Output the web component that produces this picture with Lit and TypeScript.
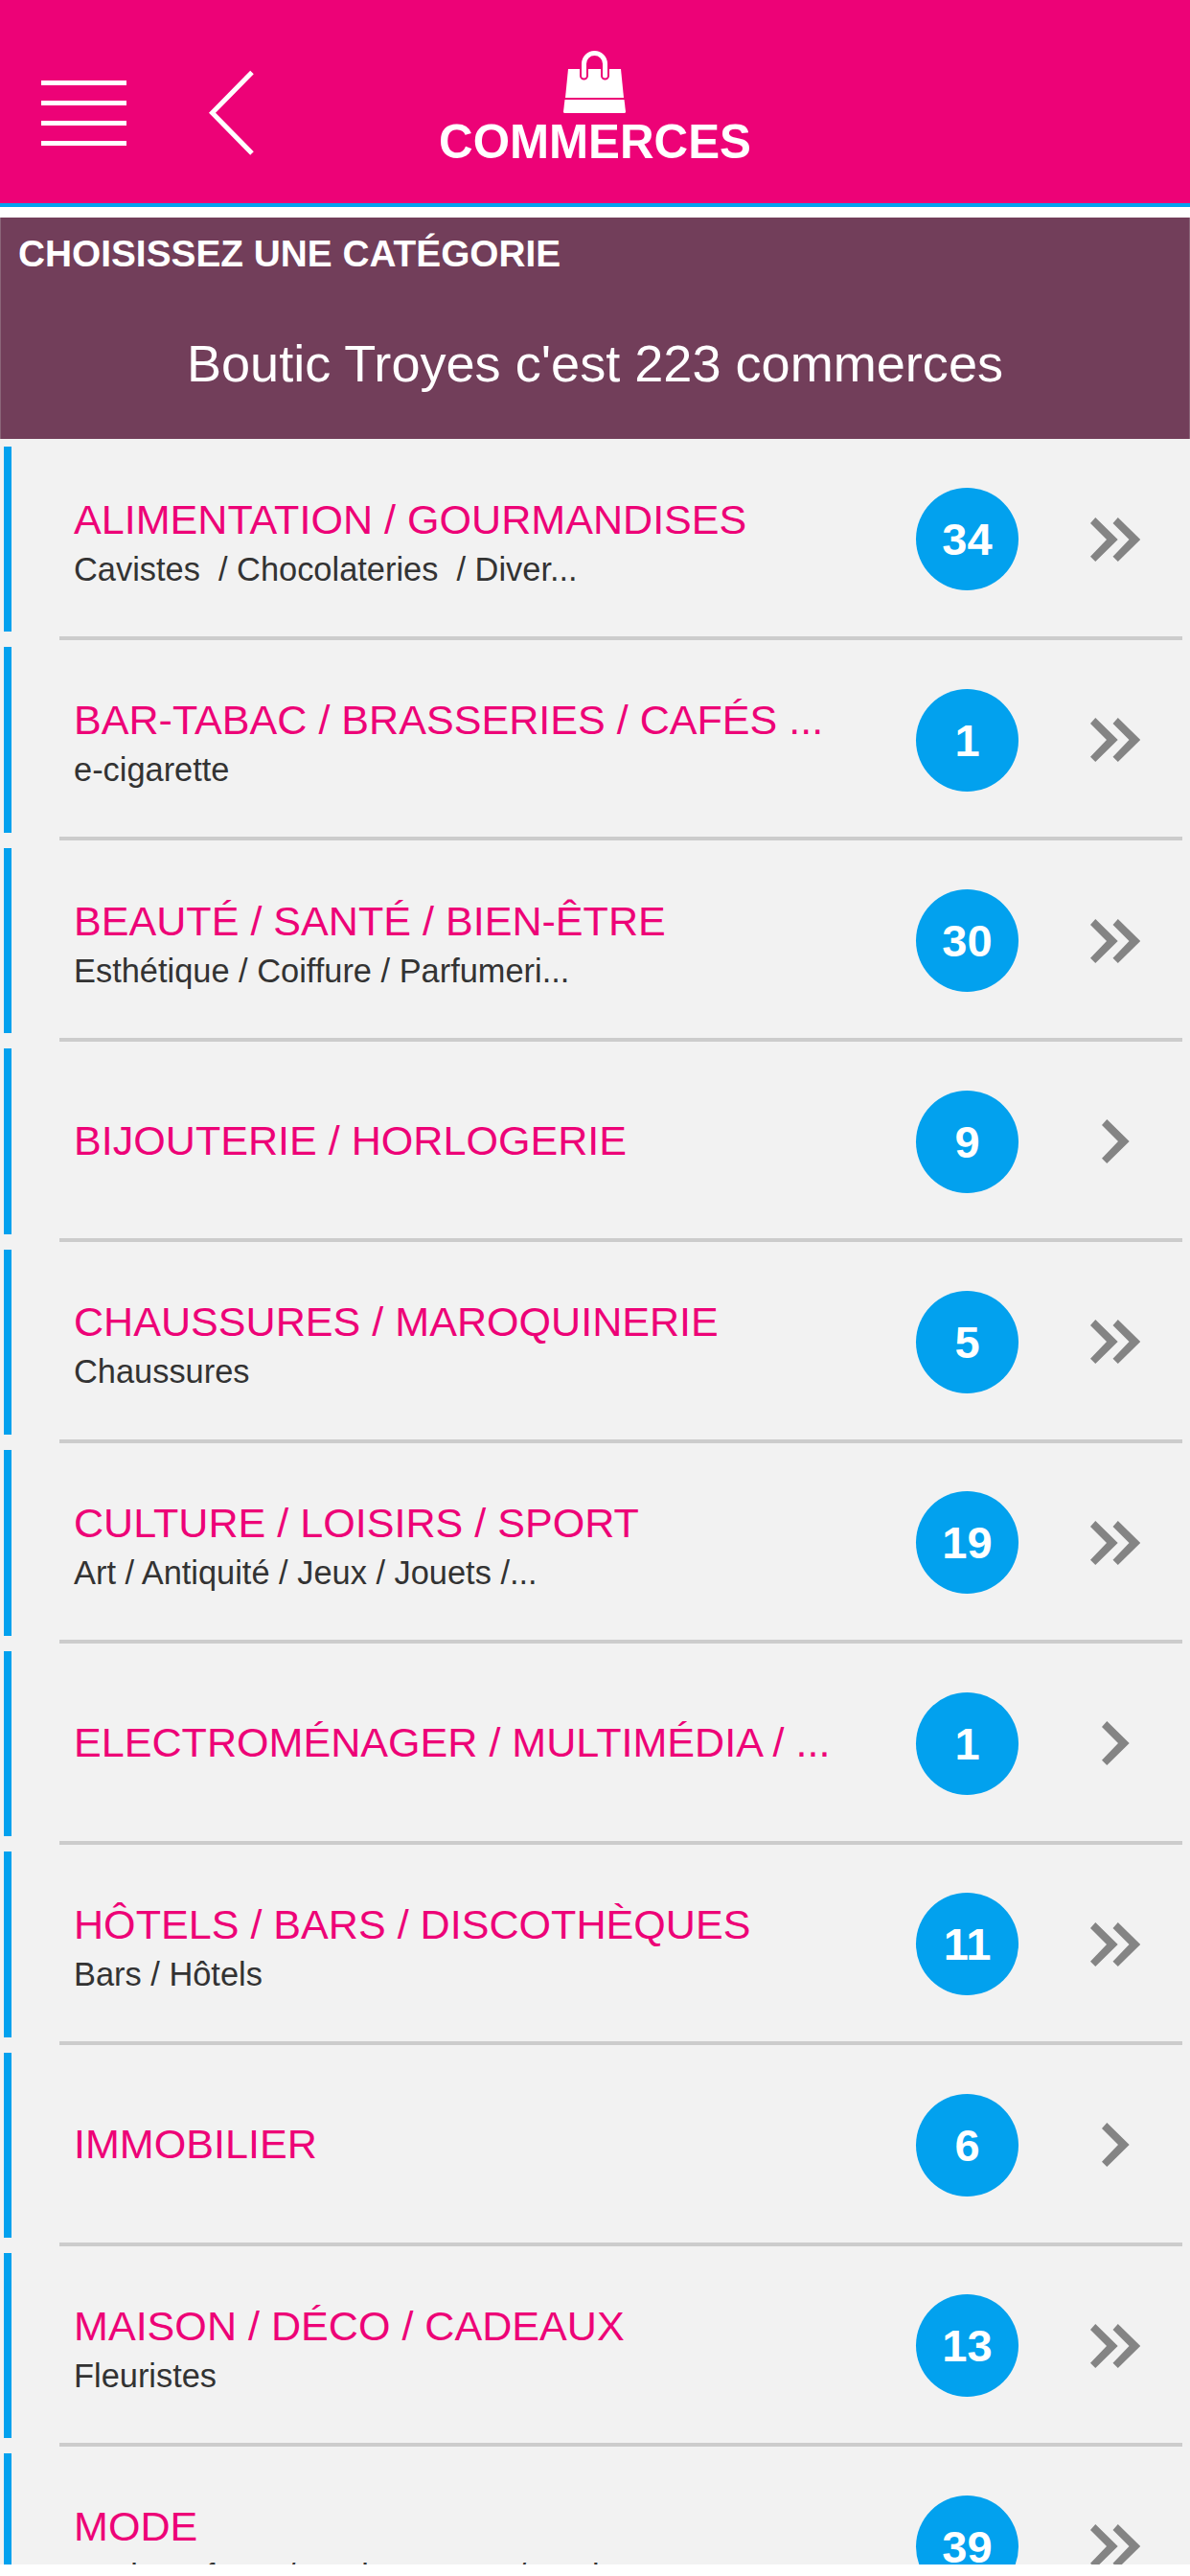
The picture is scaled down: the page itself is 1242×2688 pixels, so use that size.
import { LitElement, html, css, svg } from "lit";
import { customElement } from "lit/decorators.js";

const rows: { t: string; s?: string; n: number }[] = [
  { t: "ALIMENTATION / GOURMANDISES", s: "Cavistes\u00a0 / Chocolateries\u00a0 / Diver...", n: 34 },
  { t: "BAR-TABAC / BRASSERIES / CAFÉS ...", s: "e-cigarette", n: 1 },
  { t: "BEAUTÉ / SANTÉ / BIEN-ÊTRE", s: "Esthétique / Coiffure / Parfumeri...", n: 30 },
  { t: "BIJOUTERIE / HORLOGERIE", n: 9 },
  { t: "CHAUSSURES / MAROQUINERIE", s: "Chaussures", n: 5 },
  { t: "CULTURE / LOISIRS / SPORT", s: "Art / Antiquité / Jeux / Jouets /...", n: 19 },
  { t: "ELECTROMÉNAGER / MULTIMÉDIA / ...", n: 1 },
  { t: "HÔTELS / BARS / DISCOTHÈQUES", s: "Bars / Hôtels", n: 11 },
  { t: "IMMOBILIER", n: 6 },
  { t: "MAISON / DÉCO / CADEAUX", s: "Fleuristes", n: 13 },
  { t: "MODE", s: "Mode Enfants / Mode Femme / Mode H...", n: 39 },
];

@customElement("app-root")
export class AppRoot extends LitElement {
  static styles = css`
    :host { display: block; height: 2676px; overflow: hidden; background: #fff; font-family: "Liberation Sans", Arial, sans-serif; }
    .header { height: 212px; background: #ed0277; border-bottom: 4px solid #02a1ee; position: relative; display: flex; justify-content: center; }
    .burger { position: absolute; left: 43px; top: 84px; width: 89px; height: 68px; }
    .back { position: absolute; left: 215px; top: 70px; width: 54px; height: 96px; }
    .brand { display: flex; flex-direction: column; align-items: center; padding-top: 53px; }
    .bag { width: 65px; height: 65px; display: block; }
    .brand-title { color: #fff; font-weight: 700; font-size: 49.3px; line-height: 56px; margin-top: 2px; }
    .band { margin-top: 11px; height: 231px; background: #723e5a; color: #fff; border: solid #8a6478; border-width: 0 1px; }
    .band-title { font-size: 38.8px; font-weight: 700; line-height: 44px; padding: 16px 0 0 18px; }
    .band-sub { font-size: 54.1px; line-height: 62px; text-align: center; margin-top: 61px; }
    .list { background: #f2f2f2; padding-top: 8px; }
    .row { height: 193.45px; margin-bottom: 16px; position: relative; display: flex; align-items: center; border-left: 8px solid #02a1ee; margin-left: 4px; }
    .row::after { content: ""; position: absolute; left: 50px; right: 8px; top: 198px; height: 4px; background: #ccc; }
    .text { width: 880px; padding: 0 0 2px 65px; box-sizing: border-box; }
    .text.with-sub { padding: 5px 0 0 65px; }
    .title { font-size: 43.1px; line-height: 48px; color: #ed0277; white-space: nowrap; }
    .sub { font-size: 34.4px; line-height: 38px; color: #333; white-space: nowrap; margin-top: 9px; }
    .badge { width: 107px; height: 107px; flex: none; border-radius: 50%; background: #02a1ee; color: #fff; font-weight: 700; font-size: 47px; display: flex; align-items: center; justify-content: center; margin-left: 64px; }
    .chev { width: 52px; height: 46px; margin-left: 75px; display: block; flex: none; }
  `;

  private chevrons(double: boolean) {
    const a = "0,6 5.3,0 28.7,23 5.3,46 0,40.7 17,23";
    return html`<svg class="chev" viewBox="0 0 52 46" fill="#848484">
      ${double
        ? svg`<polygon points=${a}/><polygon points=${a} transform="translate(23.5 0)"/>`
        : svg`<polygon points=${a} transform="translate(12 0)"/>`}
    </svg>`;
  }

  render() {
    return html`
      <div class="header">
        <svg class="burger" viewBox="0 0 89 68" fill="#fff">
          <rect y="0" width="89" height="5"/><rect y="21" width="89" height="5"/>
          <rect y="42" width="89" height="5"/><rect y="63" width="89" height="5"/>
        </svg>
        <svg class="back" viewBox="0 0 54 96" fill="none" stroke="#fff" stroke-width="5">
          <path d="M48 5.5 L6.5 47.7 L48 90"/>
        </svg>
        <div class="brand">
          <svg class="bag" viewBox="0 0 65 65" fill="#fff">
            <path d="M5 19 H60 L63 49 H2 Z"/>
            <path d="M1.5 51 H63.5 L65 63.5 Q65 65 63.5 65 H1.5 Q0 65 0 63.5 Z"/>
            <path d="M21.5 26 V13.5 a11 11 0 0 1 22 0 V26" fill="none" stroke="#ed0277" stroke-width="9" stroke-linecap="round"/>
            <path d="M21.5 26 V13.5 a11 11 0 0 1 22 0 V26" fill="none" stroke="#fff" stroke-width="5" stroke-linecap="round"/>
          </svg>
          <div class="brand-title">COMMERCES</div>
        </div>
      </div>
      <div class="band">
        <div class="band-title">CHOISISSEZ UNE CATÉGORIE</div>
        <div class="band-sub">Boutic Troyes c'est 223 commerces</div>
      </div>
      <div class="list">
        ${rows.map(
          (r) => html`<div class="row">
            <div class="text ${r.s ? "with-sub" : ""}">
              <div class="title">${r.t}</div>
              ${r.s ? html`<div class="sub">${r.s}</div>` : ""}
            </div>
            <div class="badge">${r.n}</div>
            ${this.chevrons(!!r.s)}
          </div>`
        )}
      </div>
    `;
  }
}
